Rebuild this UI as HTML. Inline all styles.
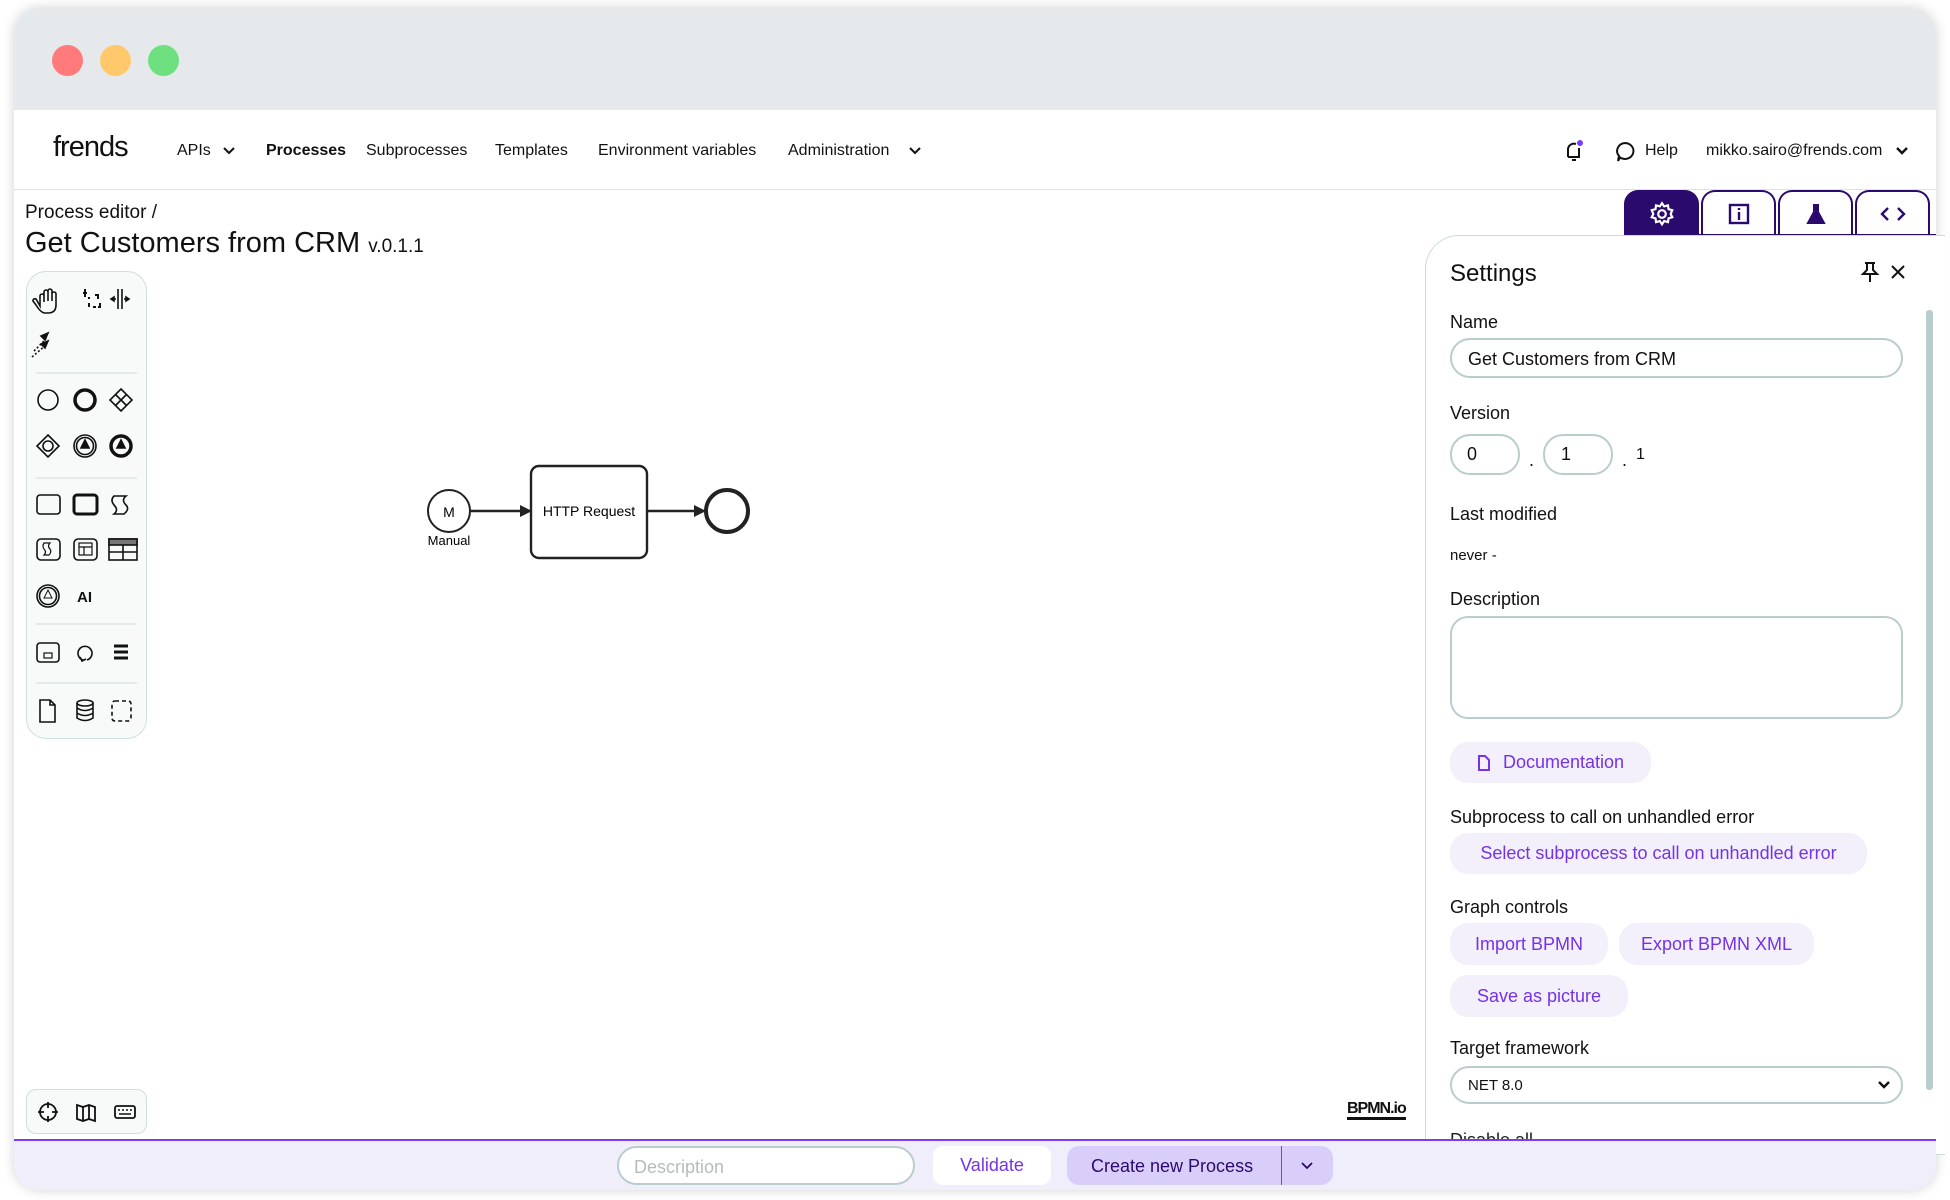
<!DOCTYPE html>
<html><head><meta charset="utf-8"><style>
*{box-sizing:border-box;margin:0;padding:0}
body{width:1950px;height:1200px;background:#fff;font-family:"Liberation Sans",sans-serif;color:#111;position:relative;overflow:hidden}
.a{position:absolute}
.card{left:14px;top:8px;width:1922px;height:1182px;border-radius:26px;box-shadow:0 0 12px rgba(0,0,0,.18);overflow:hidden;background:#fff}
.tb{left:0;top:0;width:100%;height:102px;background:#e6e9ec}
.dot{width:31px;height:31px;border-radius:50%;top:37px}
.nav{font-size:16px;top:142px;white-space:nowrap}
.lbl{font-size:18px;left:1450px;white-space:nowrap}
.inp{border:2px solid #b9cdcc;border-radius:20px;background:#fff}
.btn{background:#f3f0fc;border-radius:18px;color:#7433e6;font-size:18px;white-space:nowrap;display:flex;align-items:center;justify-content:center}
.tab{top:190px;height:46px;border:2px solid #2b0a6e;border-bottom:none;border-radius:14px 14px 0 0;background:#fff;display:flex;align-items:center;justify-content:center}
</style></head><body>
<div class="a card">
 <div class="a tb"></div>
 <div class="a dot" style="left:38px;background:#ff7b7b"></div>
 <div class="a dot" style="left:86px;background:#ffc96b"></div>
 <div class="a dot" style="left:134px;background:#6fe07f"></div>
</div>
<div class="a" style="left:14px;top:189px;width:1922px;height:1px;background:#dde3e3"></div>
<div class="a" style="left:53px;top:131px;font-size:29px;letter-spacing:-1px">frends</div>
<div class="a nav" style="left:177px">APIs</div>
<svg class="a" style="left:222px;top:146px" width="14" height="10"><path d="M2 2l5 5 5-5" stroke="#111" stroke-width="2" fill="none"/></svg>
<div class="a nav" style="left:266px;font-weight:bold">Processes</div>
<div class="a nav" style="left:366px">Subprocesses</div>
<div class="a nav" style="left:495px">Templates</div>
<div class="a nav" style="left:598px">Environment variables</div>
<div class="a nav" style="left:788px">Administration</div>
<svg class="a" style="left:908px;top:146px" width="14" height="10"><path d="M2 2l5 5 5-5" stroke="#111" stroke-width="2" fill="none"/></svg>
<svg class="a" style="left:1563px;top:139px" width="22" height="24"><path d="M5 18V10a6 6 0 0 1 8-5M5 18h12M9 21h4M16 9v9" stroke="#111" stroke-width="2" fill="none"/><circle cx="17" cy="4" r="3" fill="#7b3cf5"/></svg>
<svg class="a" style="left:1614px;top:141px" width="22" height="22"><path d="M11 2a8.5 8 0 1 1-5 14.5L4 20l1-5A8.5 8 0 0 1 11 2z" stroke="#111" stroke-width="2" fill="none"/></svg>
<div class="a nav" style="left:1645px">Help</div>
<div class="a nav" style="left:1706px">mikko.sairo@frends.com</div>
<svg class="a" style="left:1895px;top:146px" width="14" height="10"><path d="M2 2l5 5 5-5" stroke="#111" stroke-width="2.4" fill="none"/></svg>
<div class="a" style="left:25px;top:202px;font-size:19px">Process editor /</div>
<div class="a" style="left:25px;top:227px;font-size:29px;white-space:nowrap">Get Customers from CRM <span style="font-size:19px">v.0.1.1</span></div>
<div class="a" style="left:26px;top:271px;width:121px;height:468px;border:1px solid #cfdede;border-radius:20px;background:#f8fafa"></div>
<svg class="a" style="left:26px;top:271px" width="121" height="468" fill="none" stroke="#111" stroke-width="1.6">
 <path d="M14 35v-10a2 2 0 0 1 4 0v6v-10a2 2 0 0 1 4 0v9v-10a2 2 0 0 1 4 0v10v-7a2 2 0 0 1 4 0v11q0 8-8 8h-3q-4 0-9-8l-3-4a2 2 0 0 1 3-2z"/>
 <path d="M57 22h4M59 18v8M63 26v2M63 32v4M67 36h3M72 36h2v-4M72 28v-4h-3" stroke-width="2"/>
 <path d="M92 18v20M96 18v20M85 28h5M103 28h-5"/><path d="M85 28l3-2v4zM103 28l-3-2v4z" fill="#111"/>
 <path d="M8 80l12-12M6 86l14-12" stroke-dasharray="2 2"/><path d="M22 62l-7 3 4 4zM22 70l-7 3 4 4z" fill="#111"/>
 <line x1="10" y1="102" x2="111" y2="102" stroke="#ccdbdb" stroke-width="1"/>
 <circle cx="22" cy="129" r="10"/><circle cx="59" cy="129" r="10" stroke-width="3.5"/>
 <path d="M95 118l11 11-11 11-11-11zM90 124l10 10M100 124l-10 10"/>
 <path d="M22 164l11 11-11 11-11-11z"/><circle cx="22" cy="175" r="5"/>
 <circle cx="59" cy="175" r="11"/><circle cx="59" cy="175" r="8.5"/><path d="M59 169l4 8h-8z" fill="#111"/>
 <circle cx="95" cy="175" r="10" stroke-width="3.5"/><path d="M95 169l4 8h-8z" fill="#111"/>
 <line x1="10" y1="207" x2="111" y2="207" stroke="#ccdbdb" stroke-width="1"/>
 <rect x="11" y="224" width="23" height="19" rx="3"/><rect x="48" y="224" width="23" height="19" rx="3" stroke-width="3"/>
 <path d="M88 225h12q-5 4 0 9q4 4-2 9h-10q5-4 0-9q-4-5 0-9z"/>
 <rect x="11" y="268" width="23" height="21" rx="4"/><path d="M18 272h6q-3 3 0 6q2 3-1 6h-5q3-3 0-6q-2-3 0-6z" stroke-width="1.2"/>
 <rect x="48" y="268" width="23" height="21" rx="4"/><rect x="53" y="272" width="13" height="12" stroke-width="1.2"/><path d="M53 276h13M58 276v8" stroke-width="1.2"/>
 <rect x="83" y="268" width="28" height="21"/><rect x="83" y="268" width="28" height="6" fill="#777"/><path d="M83 281h28M97 274v15"/>
 <circle cx="22" cy="325" r="11"/><circle cx="22" cy="325" r="8.5"/><path d="M22 319l4 8h-8z" stroke-width="1"/>
 <line x1="10" y1="353" x2="111" y2="353" stroke="#ccdbdb" stroke-width="1"/>
 <rect x="11" y="372" width="22" height="19" rx="3"/><rect x="18" y="382" width="8" height="5" stroke-width="1.2"/>
 <path d="M57 389a7 7 0 1 1 4 0M54 386l2 4 4-2"/>
 <path d="M88 375h14M88 381h14M88 387h14" stroke-width="3"/>
 <line x1="10" y1="412" x2="111" y2="412" stroke="#ccdbdb" stroke-width="1"/>
 <path d="M14 429h10l5 5v17h-15z M24 429v5h5"/>
 <ellipse cx="59" cy="432" rx="8" ry="3"/><path d="M51 432v15q8 5 16 0v-15M51 437q8 5 16 0M51 442q8 5 16 0"/>
 <rect x="86" y="430" width="19" height="20" rx="3" stroke-dasharray="4 3"/>
 <text x="51" y="331" font-family="Liberation Sans" font-size="15" font-weight="bold" fill="#111" stroke="none">AI</text>
</svg>
<div class="a" style="left:26px;top:1089px;width:121px;height:45px;border:1px solid #cfdede;border-radius:10px;background:#f8fafa"></div>
<svg class="a" style="left:26px;top:1089px" width="121" height="45" fill="none" stroke="#111" stroke-width="1.8">
 <circle cx="22" cy="23" r="8"/><path d="M22 13v6M22 27v6M12 23h6M26 23h6"/>
 <path d="M51 16l6 2 6-2 6 2v14l-6-2-6 2-6-2zM57 18v14M63 16v14"/>
 <rect x="89" y="17" width="20" height="12" rx="2"/><path d="M92 21h2M96 21h2M100 21h2M104 21h2M93 25h12" stroke-width="1.4"/>
</svg>
<div class="a" style="left:1347px;top:1100px;font-size:16px;font-weight:bold;letter-spacing:-1px;border-bottom:3px solid #111;line-height:17px">BPMN.io</div>
<svg class="a" style="left:400px;top:440px" width="360" height="140">
 <circle cx="49" cy="71" r="21" fill="#fff" stroke="#222" stroke-width="2"/>
 <text x="49" y="77" text-anchor="middle" font-family="Liberation Sans" font-size="14">M</text>
 <text x="49" y="105" text-anchor="middle" font-family="Liberation Sans" font-size="13">Manual</text>
 <path d="M70 71h52" stroke="#222" stroke-width="2.4"/><path d="M132 71l-12-6v12z" fill="#222"/>
 <rect x="131" y="26" width="116" height="92" rx="8" fill="#fff" stroke="#222" stroke-width="2.4"/>
 <text x="189" y="76" text-anchor="middle" font-family="Liberation Sans" font-size="14">HTTP Request</text>
 <path d="M247 71h58" stroke="#222" stroke-width="2.4"/><path d="M306 71l-12-6v12z" fill="#222"/>
 <circle cx="327" cy="71" r="21" fill="#fff" stroke="#222" stroke-width="4"/>
</svg>
<div class="a tab" style="left:1624px;width:75px;background:#2b0a6e">
 <svg width="26" height="26" viewBox="0 0 24 24" fill="none" stroke="#fff" stroke-width="2"><circle cx="12" cy="12" r="3.5"/><path d="M12 2l2 3 3.5-1 .5 3.5 3.5 1-1.5 3.5 1.5 3-3.5 1-.5 3.5-3.5-1-2 3-2-3-3.5 1-.5-3.5-3.5-1 1.5-3-1.5-3.5 3.5-1 .5-3.5 3.5 1z"/></svg></div>
<div class="a tab" style="left:1701px;width:75px"><svg width="22" height="22"><rect x="2" y="2" width="18" height="18" fill="none" stroke="#2b0a6e" stroke-width="2.4"/><path d="M11 9v8M11 5v2" stroke="#2b0a6e" stroke-width="2.4"/></svg></div>
<div class="a tab" style="left:1778px;width:75px"><svg width="22" height="22"><path d="M8 2h6M9 2v7l-6 11h16l-6-11v-7" fill="#2b0a6e" stroke="#2b0a6e" stroke-width="2"/></svg></div>
<div class="a tab" style="left:1855px;width:75px"><svg width="26" height="18"><path d="M8 3l-6 6 6 6M18 3l6 6-6 6" fill="none" stroke="#2b0a6e" stroke-width="2.4"/></svg></div>
<div class="a" style="left:1624px;top:234px;width:312px;height:2px;background:#2b0a6e"></div>
<div class="a" style="left:1425px;top:235px;width:520px;height:920px;border:1px solid #cbdada;border-right:none;border-radius:34px 0 0 0;background:#fff"></div>
<div class="a" style="left:1926px;top:310px;width:7px;height:780px;background:#b9cdcc;border-radius:3px"></div>
<div class="a" style="left:1450px;top:260px;font-size:24px">Settings</div>
<svg class="a" style="left:1859px;top:260px" width="22" height="24"><path d="M6 3h10M8 3v7l-4 4h14l-4-4V3M11 14v8" fill="none" stroke="#111" stroke-width="2"/></svg>
<svg class="a" style="left:1890px;top:264px" width="16" height="16"><path d="M2 2l12 12M14 2L2 14" stroke="#111" stroke-width="2"/></svg>
<div class="a lbl" style="top:312px">Name</div>
<div class="a inp" style="left:1450px;top:338px;width:453px;height:40px"></div>
<div class="a" style="left:1468px;top:349px;font-size:18px">Get Customers from CRM</div>
<div class="a lbl" style="top:403px">Version</div>
<div class="a inp" style="left:1450px;top:434px;width:70px;height:41px"></div>
<div class="a" style="left:1467px;top:444px;font-size:18px">0</div>
<div class="a" style="left:1529px;top:450px;font-size:18px">.</div>
<div class="a inp" style="left:1543px;top:434px;width:70px;height:41px"></div>
<div class="a" style="left:1561px;top:444px;font-size:18px">1</div>
<div class="a" style="left:1622px;top:450px;font-size:18px">.</div>
<div class="a" style="left:1636px;top:446px;font-size:16px">1</div>
<div class="a lbl" style="top:504px">Last modified</div>
<div class="a" style="left:1450px;top:547px;font-size:15px">never -</div>
<div class="a lbl" style="top:589px">Description</div>
<div class="a inp" style="left:1450px;top:616px;width:453px;height:103px;border-radius:18px"></div>
<div class="a btn" style="left:1450px;top:742px;width:201px;height:41px"><svg width="14" height="16" style="margin-right:12px"><path d="M2 1h6l4 4v10H2z" fill="none" stroke="#7433e6" stroke-width="2"/></svg>Documentation</div>
<div class="a lbl" style="top:807px">Subprocess to call on unhandled error</div>
<div class="a btn" style="left:1450px;top:833px;width:417px;height:41px">Select subprocess to call on unhandled error</div>
<div class="a lbl" style="top:897px">Graph controls</div>
<div class="a btn" style="left:1450px;top:923px;width:158px;height:42px">Import BPMN</div>
<div class="a btn" style="left:1619px;top:923px;width:195px;height:42px">Export BPMN XML</div>
<div class="a btn" style="left:1450px;top:975px;width:178px;height:42px">Save as picture</div>
<div class="a lbl" style="top:1038px">Target framework</div>
<div class="a inp" style="left:1450px;top:1066px;width:453px;height:38px"></div>
<div class="a" style="left:1468px;top:1077px;font-size:15px">NET 8.0</div>
<svg class="a" style="left:1877px;top:1080px" width="14" height="10"><path d="M2 2l5 5 5-5" stroke="#111" stroke-width="2.4" fill="none"/></svg>
<div class="a" style="left:1450px;top:1130px;width:200px;height:10px;overflow:hidden;font-size:18px;color:#222">Disable all ...</div>
<div class="a" style="left:14px;top:1139px;width:1922px;height:51px;background:#f1eefb;border-top:2.5px solid #7b3cf5;border-radius:0 0 26px 26px"></div>
<div class="a inp" style="left:617px;top:1146px;width:298px;height:39px;border-radius:20px"></div>
<div class="a" style="left:634px;top:1157px;font-size:18px;color:#b5bcbc">Description</div>
<div class="a btn" style="left:933px;top:1146px;width:118px;height:39px;background:#fff;border-radius:10px">Validate</div>
<div class="a" style="left:1067px;top:1146px;width:266px;height:39px;background:#d9cdf9;border-radius:12px"></div>
<div class="a" style="left:1281px;top:1146px;width:1px;height:39px;background:#7b3cf5"></div>
<div class="a" style="left:1091px;top:1156px;font-size:18px;color:#2b0a6e">Create new Process</div>
<svg class="a" style="left:1300px;top:1161px" width="14" height="10"><path d="M2 2l5 5 5-5" stroke="#2b0a6e" stroke-width="1.8" fill="none"/></svg>
</body></html>
